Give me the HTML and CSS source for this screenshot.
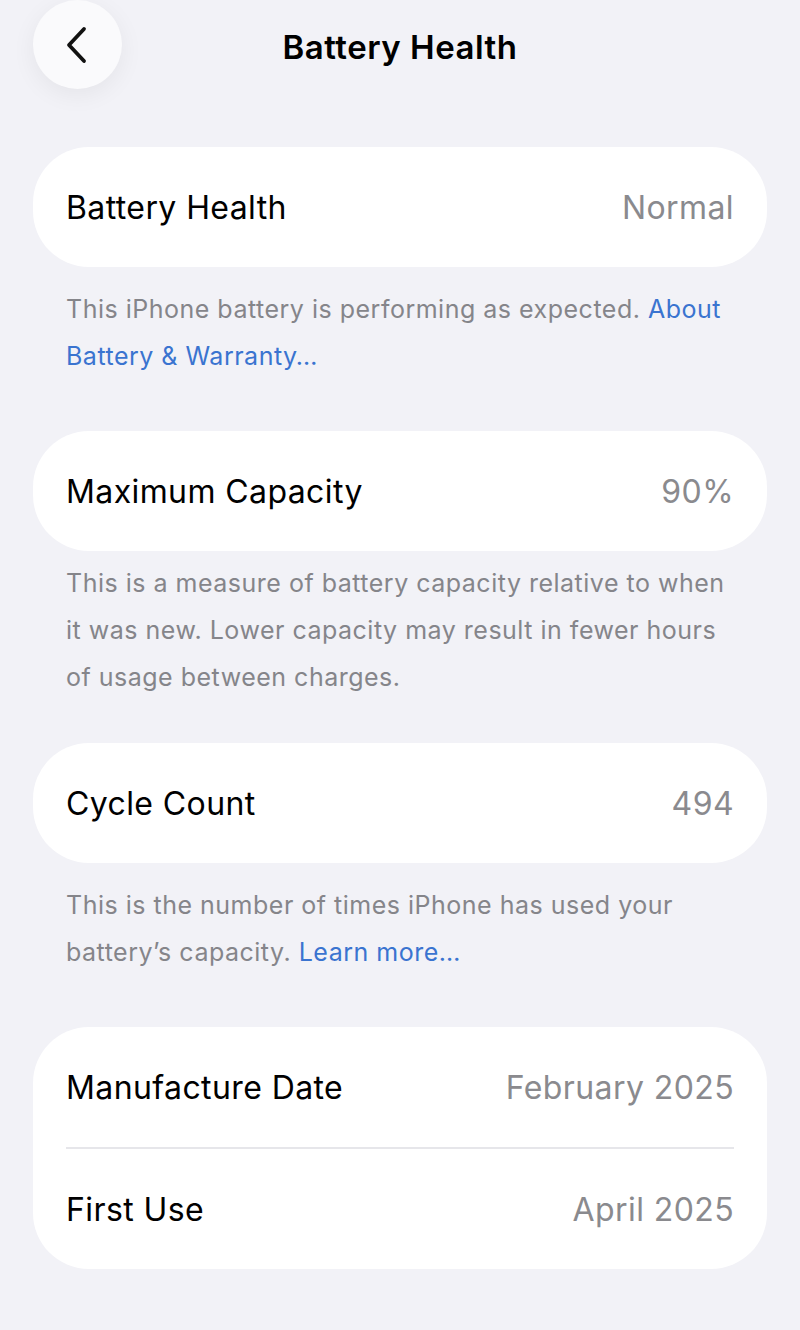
FILE: index.html
```html
<!DOCTYPE html>
<html lang="en">

<head>
    <meta charset="UTF-8">
    <meta name="viewport" content="width=device-width, initial-scale=1.0">
    <title>Battery Health</title>
    <link rel="stylesheet" href="styles.css">
</head>

<body>
    <div class="nav-bar">
        <button class="back-button" aria-label="Back">
            <svg width="26" height="40" viewBox="0 0 26 40">
                <path d="M21 4 L6 20 L21 36" fill="none" stroke="#111" stroke-width="3.8" stroke-linecap="round" stroke-linejoin="round"/>
            </svg>
        </button>
        <h1 class="nav-title">Battery Health</h1>
        <div></div>
    </div>

    <div class="content">
        <div class="group">
            <div class="row">
                <span class="label">Battery Health</span>
                <span class="value">Normal</span>
            </div>
        </div>
        <p class="footer">This iPhone battery is performing as expected. <a href="#">About Battery &amp; Warranty…</a></p>

        <div class="group">
            <div class="row">
                <span class="label">Maximum Capacity</span>
                <span class="value">90%</span>
            </div>
        </div>
        <p class="footer footer-tight">This is a measure of battery capacity relative to when it was new. Lower capacity may result in fewer hours of usage between charges.</p>

        <div class="group">
            <div class="row">
                <span class="label">Cycle Count</span>
                <span class="value">494</span>
            </div>
        </div>
        <p class="footer">This is the number of times iPhone has used your battery’s capacity. <a href="#">Learn more…</a></p>

        <div class="group">
            <div class="row">
                <span class="label">Manufacture Date</span>
                <span class="value">February 2025</span>
            </div>
            <div class="divider"></div>
            <div class="row">
                <span class="label">First Use</span>
                <span class="value">April 2025</span>
            </div>
        </div>
    </div>
</body>

</html>
```

FILE: styles.css
```css
body {
    font-family: Inter, "Noto Sans", sans-serif;
    background-color: #f2f2f7;
    margin: 0;
    padding: 0;
    color: #000;
}

.nav-bar {
    display: grid;
    grid-template-columns: 1fr auto 1fr;
    align-items: center;
    height: 89px;
}

.back-button {
    width: 89px;
    height: 89px;
    margin-left: 33px;
    border: none;
    border-radius: 50%;
    background-color: #fafafc;
    box-shadow: 0px 6px 24px rgba(0, 0, 0, 0.06);
    display: flex;
    justify-content: center;
    align-items: center;
    padding: 0 4px 0 0;
    cursor: pointer;
}

.nav-title {
    margin: 0;
    font-size: 33px;
    font-weight: 600;
    letter-spacing: 0.5px;
    padding-top: 4px;
}

.content {
    padding: 58px 33px 40px 33px;
}

.group {
    background-color: white;
    border-radius: 56px;
}

.row {
    display: flex;
    justify-content: space-between;
    align-items: center;
    height: 120px;
    padding: 0 33px;
    font-size: 32px;
    letter-spacing: 0.4px;
}

.value {
    color: #8a8a8e;
}

.divider {
    height: 2px;
    background-color: #e6e6ea;
    margin: 0 33px;
}

.footer {
    margin: 19px 0 51px 0;
    padding: 0 33px;
    font-size: 25px;
    line-height: 47px;
    letter-spacing: 0.5px;
    color: #85858a;
}

.footer-tight {
    margin: 9px 0 42px 0;
}

.footer a {
    color: #3a74d0;
    text-decoration: none;
}
```
